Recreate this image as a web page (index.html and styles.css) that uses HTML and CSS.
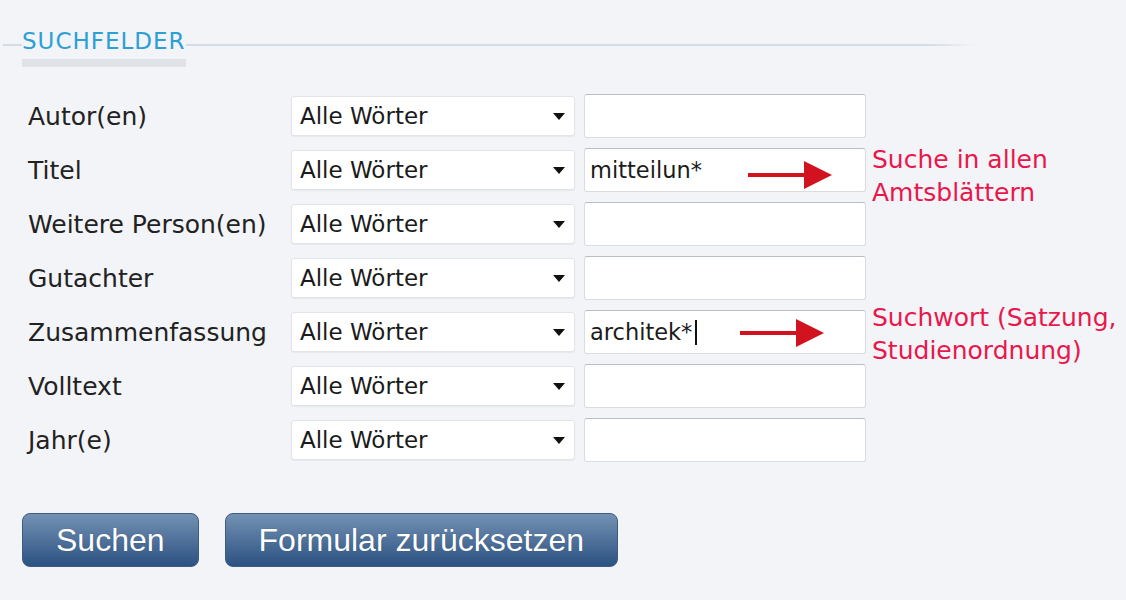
FILE: index.html
```html
<!DOCTYPE html>
<html lang="de">
<head>
    <meta charset="UTF-8">
    <meta name="viewport" content="width=device-width, initial-scale=1.0">
    <title>Suchfelder</title>
    <link rel="stylesheet" href="styles.css">
</head>
<body>
    <div class="page">
        <div class="fieldset-head">
            <span class="rule rule-start"></span>
            <div class="legend">
                <span class="legend-text">SUCHFELDER</span>
                <span class="legend-bar"></span>
            </div>
            <span class="rule rule-end"></span>
        </div>

        <form class="search-grid" onsubmit="return false">
            <label class="field-label">Autor(en)</label>
            <div class="select-wrap"><select><option>Alle Wörter</option></select></div>
            <div class="input-wrap"><input type="text"></div>
            <div class="note"></div>

            <label class="field-label">Titel</label>
            <div class="select-wrap"><select><option>Alle Wörter</option></select></div>
            <div class="input-wrap">
                <input type="text" value="mitteilun*">
                <span class="arrow arrow-title"></span>
            </div>
            <div class="note">Suche in allen<br>Amtsblättern</div>

            <label class="field-label">Weitere Person(en)</label>
            <div class="select-wrap"><select><option>Alle Wörter</option></select></div>
            <div class="input-wrap"><input type="text"></div>
            <div class="note"></div>

            <label class="field-label">Gutachter</label>
            <div class="select-wrap"><select><option>Alle Wörter</option></select></div>
            <div class="input-wrap"><input type="text"></div>
            <div class="note"></div>

            <label class="field-label">Zusammenfassung</label>
            <div class="select-wrap"><select><option>Alle Wörter</option></select></div>
            <div class="input-wrap">
                <input type="text" value="architek*">
                <span class="caret"></span>
                <span class="arrow arrow-summary"></span>
            </div>
            <div class="note note-low">Suchwort (Satzung,<br>Studienordnung)</div>

            <label class="field-label">Volltext</label>
            <div class="select-wrap"><select><option>Alle Wörter</option></select></div>
            <div class="input-wrap"><input type="text"></div>
            <div class="note"></div>

            <label class="field-label">Jahr(e)</label>
            <div class="select-wrap"><select><option>Alle Wörter</option></select></div>
            <div class="input-wrap"><input type="text"></div>
            <div class="note"></div>
        </form>

        <div class="actions">
            <button class="btn" type="button">Suchen</button>
            <button class="btn" type="button">Formular zurücksetzen</button>
        </div>
    </div>
</body>
</html>
```

FILE: styles.css
```css
body {
    margin: 0;
    padding: 0;
    background-color: #f2f4f8;
    font-family: 'DejaVu Sans', Verdana, sans-serif;
    color: #222;
}
.page {
    width: 1126px;
    height: 600px;
    overflow: hidden;
}

/* fieldset header */
.fieldset-head {
    display: flex;
    align-items: flex-start;
    margin-left: 3px;
    width: 972px;
    padding-top: 30px;
}
.rule {
    height: 2px;
    margin-top: 14px;
    background-color: #d3dbe4;
}
.rule-start {
    width: 19px;
}
.rule-end {
    flex: 1;
    background: linear-gradient(to right, #d3dbe4 94%, rgba(211,219,228,0));
}
.legend {
    display: flex;
    flex-direction: column;
}
.legend-text {
    font-size: 23px;
    line-height: 22px;
    color: #2b9fd6;
    letter-spacing: 1px;
}
.legend-bar {
    height: 8px;
    margin-top: 7px;
    background-color: #dfe2e6;
}

/* rows */
.search-grid {
    display: grid;
    grid-template-columns: 254px 284px 282px auto;
    grid-auto-rows: 54px;
    column-gap: 9px;
    margin: 22px 0 0 28px;
}
.field-label {
    align-self: center;
    font-size: 25px;
    color: #222;
    white-space: nowrap;
}
.select-wrap {
    position: relative;
    align-self: center;
}
.select-wrap select {
    display: block;
    width: 100%;
    height: 40px;
    padding: 0 30px 0 8px;
    border: 1px solid #e1e4e9;
    border-radius: 3px;
    background-color: #fff;
    box-shadow: 0 1px 1px rgba(0,0,0,0.05);
    font-family: 'DejaVu Sans', Verdana, sans-serif;
    font-size: 23px;
    color: #1b1b1b;
    -webkit-appearance: none;
    appearance: none;
}
.select-wrap::after {
    content: '';
    position: absolute;
    right: 10px;
    top: 17px;
    border-left: 6px solid transparent;
    border-right: 6px solid transparent;
    border-top: 7px solid #111;
    pointer-events: none;
}
.input-wrap {
    position: relative;
    align-self: center;
}
.input-wrap input {
    display: block;
    box-sizing: border-box;
    width: 100%;
    height: 44px;
    padding: 0 5px;
    border: 1px solid #d9dde2;
    border-top-color: #b9bec5;
    border-radius: 3px;
    background-color: #fff;
    font-family: 'DejaVu Sans', Verdana, sans-serif;
    font-size: 22.5px;
    color: #1b1b1b;
}
.caret {
    position: absolute;
    left: 111px;
    top: 10px;
    width: 2px;
    height: 25px;
    background-color: #111;
}

/* red arrows lying over the inputs */
.arrow {
    position: absolute;
    height: 4px;
    background-color: #d2121f;
}
.arrow::after {
    content: '';
    position: absolute;
    right: -24px;
    top: -12px;
    border-top: 14px solid transparent;
    border-bottom: 14px solid transparent;
    border-left: 28px solid #d2121f;
}
.arrow-title {
    left: 164px;
    top: 25px;
    width: 60px;
}
.arrow-summary {
    left: 156px;
    top: 21px;
    width: 60px;
}

.note {
    margin-left: -3px;
    font-size: 25px;
    line-height: 33px;
    color: #e9174c;
    white-space: nowrap;
}
.note-low {
    margin-top: -4px;
}

/* buttons */
.actions {
    display: flex;
    gap: 26px;
    margin: 46px 0 0 22px;
}
.btn {
    height: 54px;
    padding: 0 33px;
    border: 1px solid #3c5c82;
    border-radius: 8px;
    background: linear-gradient(to bottom, #7391b3, #2c5282);
    font-family: 'Liberation Sans', Arial, sans-serif;
    font-size: 32px;
    color: #fff;
    text-shadow: 0 0 1px rgba(0,0,0,0.3);
    cursor: pointer;
}
```
